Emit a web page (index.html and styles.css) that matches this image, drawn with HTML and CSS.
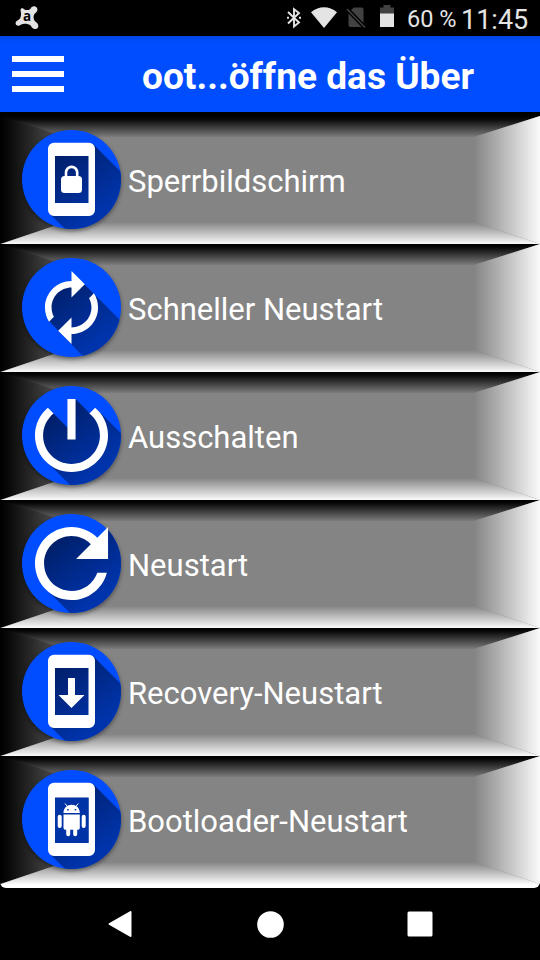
FILE: index.html
```html
<!DOCTYPE html>
<html lang="de">
<head>
<meta charset="utf-8">
<title>Reboot</title>
<link rel="stylesheet" href="styles.css">
</head>
<body>
<svg class="defs" aria-hidden="true">
  <defs>
    <linearGradient id="shade" gradientUnits="userSpaceOnUse" x1="45" y1="35" x2="96" y2="100">
      <stop offset="0" stop-color="#001c60"/><stop offset="1" stop-color="#0034ac"/>
    </linearGradient>
    <linearGradient id="leftFade"><stop offset="0" stop-color="#000"/><stop offset=".12" stop-color="#080808"/><stop offset="1" stop-color="#5a5a5a"/></linearGradient>
    <linearGradient id="rightFade"><stop offset="0" stop-color="#848484"/><stop offset="1" stop-color="#fafafa"/></linearGradient>
    <linearGradient id="topFade" x2="0" y2="1"><stop offset="0" stop-color="#000"/><stop offset=".15" stop-color="#080808"/><stop offset="1" stop-color="#7c7c7c"/></linearGradient>
    <linearGradient id="bottomFade" x2="0" y2="1"><stop offset="0" stop-color="#848484"/><stop offset="1" stop-color="#fafafa"/></linearGradient>
    <clipPath id="disc"><circle cx="71.5" cy="63.5" r="49.5"/></clipPath>
    <g id="bevel">
      <path fill="#848484" d="M0 0h540v128H0z"/>
      <path fill="url(#topFade)" d="M0 0H540L474 21H0z"/>
      <path fill="url(#leftFade)" d="M0 0L66 21V106L0 128z"/>
      <path fill="url(#rightFade)" d="M540 0V128L474 106V21z"/>
      <path fill="url(#bottomFade)" d="M1 128L66 106H474L540 128z"/>
    </g>
    <circle id="base" cx="71.5" cy="63.5" r="49.5" fill="#004dff"/>
    <g id="phone">
      <path clip-path="url(#disc)" fill="url(#shade)" d="M93 28L140 75V128H80L49 97z"/>
      <path fill="url(#shade)" d="M54 39h36v49H54z"/>
      <path fill="#fff" fill-rule="evenodd" d="M54 26.7H89A6 6 0 0 1 95 32.7V94A6 6 0 0 1 89 100H54A6 6 0 0 1 48 94V32.7A6 6 0 0 1 54 26.7zM55 40V87H88.5V40z"/>
    </g>
  </defs>
</svg>
<div class="screen">
  <div class="status">
    <svg class="avast" viewBox="0 0 26 26"><path fill="#e4e4e4" d="M6 5.500C4.800 1.500 8.500 1.500 10 3.800Q13 5 16 3C17 .5 19.500-.2 21.500.8C24.500 2.500 23.500 6 21 7.500C18.500 9.500 19 14 21 16C24.500 18 25.500 22 22.500 23.600C19.500 25 17.500 22.500 16.500 20.500C14 18.500 9 18 6.500 19.200C3.500 21.500.5 20.500.6 17.500C1 15.500 3 15 4.500 13.800C6.500 11.500 6.500 8 6 5.500z"/><text x="12.500" y="16" class="a">a</text></svg>
    <svg class="bt" viewBox="0 0 14 22"><path fill="none" stroke="#e4e4e4" stroke-width="1.900" d="M1 5L12 15.500L7 19.500V2.200L12 6L1 16.500"/><path fill="#e4e4e4" d="M0 9.800h2v2H0zM12 9.800h2v2h-2z"/></svg>
    <svg class="wifi" viewBox="0 0 26 22"><path fill="#e4e4e4" d="M0 5.300C8-1.300 18-1.300 26 5.300L13 21z"/></svg>
    <svg class="sim" viewBox="0 0 20 22"><path fill="#424242" d="M2.500 6.500L15.500 20H4.500Q2.500 20 2.500 18zM5 3L8 .5H15.500Q17.500.5 17.500 2.500V16z"/><path stroke="#424242" stroke-width="1.500" d="M1 2L19 20.500"/></svg>
    <svg class="battery" viewBox="0 0 14 22"><path fill="#424242" d="M3.500 0h7v2.500H14V9H0V2.500h3.500z"/><path fill="#e4e4e4" d="M0 8.500h14V22H0z"/></svg>
    <span class="percent">60&nbsp;%</span><span class="clock">11:45</span>
  </div>
  <header class="bar">
    <div class="menu"><i></i><i></i><i></i></div>
    <h1>oot...öffne das Über</h1>
  </header>
  <main class="list">
    <div class="row">
      <svg class="bg" viewBox="0 0 540 128"><use href="#bevel"/></svg>
      <svg class="icon" viewBox="0 0 128 128"><use href="#base" class="drop"/><use href="#phone"/><rect x="61" y="60" width="21" height="17" rx="3.500" fill="#fff"/><path fill="none" stroke="#fff" stroke-width="2.600" d="M66 61V56.500a5.600 5.600 0 0 1 11.200 0V61"/></svg>
      <span>Sperrbildschirm</span>
    </div>
    <div class="row">
      <svg class="bg" viewBox="0 0 540 128"><use href="#bevel"/></svg>
      <svg class="icon" viewBox="0 0 128 128"><use href="#base" class="drop"/><path clip-path="url(#disc)" fill="url(#shade)" d="M48.500 76L49.500 55L60 43L72 39L84.500 40.500L140 96V128H98L49 77z"/><path fill="#fff" transform="translate(71.500 63.500) scale(-3.320 3.320) translate(-12 -12)" d="M12 4V1L8 5l4 4V6c3.310 0 6 2.690 6 6 0 1.010-.25 1.970-.7 2.800l1.460 1.460C19.540 15.030 20 13.570 20 12c0-4.420-3.580-8-8-8zm0 14c-3.310 0-6-2.690-6-6 0-1.010.25-1.970.7-2.800L5.240 7.740C4.460 8.970 4 10.430 4 12c0 4.420 3.580 8 8 8v3l4-4-4-4v3z"/></svg>
      <span>Schneller Neustart</span>
    </div>
    <div class="row">
      <svg class="bg" viewBox="0 0 540 128"><use href="#bevel"/></svg>
      <svg class="icon" viewBox="0 0 128 128"><use href="#base" class="drop"/><path clip-path="url(#disc)" fill="url(#shade)" d="M39 63L42 49L52.500 40.500L68 56V27H75.600L90 41.500L95.200 35.800L140 80V128H85L45 88z"/><path fill="#fff" transform="translate(71.500 63.500) scale(4.060) translate(-12 -12)" d="M13 3h-2v10h2V3zm4.830 2.170l-1.420 1.420C17.990 7.860 19 9.810 19 12c0 3.870-3.130 7-7 7s-7-3.130-7-7c0-2.190 1.010-4.140 2.580-5.420L6.170 5.170C4.230 6.820 3 9.260 3 12c0 4.970 4.030 9 9 9s9-4.030 9-9c0-2.740-1.230-5.180-3.170-6.830z"/></svg>
      <span>Ausschalten</span>
    </div>
    <div class="row">
      <svg class="bg" viewBox="0 0 540 128"><use href="#bevel"/></svg>
      <svg class="icon" viewBox="0 0 128 128"><use href="#base" class="drop"/><path clip-path="url(#disc)" fill="url(#shade)" d="M39 63L47 41L71 31L97 39L108 28L140 60V128H85L45 88z"/><path fill="#fff" transform="translate(71.500 63.500) scale(4.570) translate(-12 -12)" d="M17.650 6.350C16.200 4.900 14.210 4 12 4c-4.420 0-7.990 3.580-7.990 8s3.570 8 7.990 8c3.730 0 6.840-2.550 7.730-6h-2.080c-.82 2.330-3.040 4-5.650 4-3.310 0-6-2.690-6-6s2.690-6 6-6c1.660 0 3.140.69 4.220 1.780L13 11h7V4l-2.350 2.350z"/></svg>
      <span>Neustart</span>
    </div>
    <div class="row">
      <svg class="bg" viewBox="0 0 540 128"><use href="#bevel"/></svg>
      <svg class="icon" viewBox="0 0 128 128"><use href="#base" class="drop"/><use href="#phone"/><path fill="#fff" d="M68 50h7v17h9.500L71.500 80L58.500 67H68z"/></svg>
      <span>Recovery-Neustart</span>
    </div>
    <div class="row">
      <svg class="bg" viewBox="0 0 540 128"><use href="#bevel"/></svg>
      <svg class="icon" viewBox="0 0 128 128"><use href="#base" class="drop"/><use href="#phone"/><path fill="#0033a6" d="M55 41.500h33.500V87H55z"/><path fill="#fff" d="M54.500 39.500h34.500v2H54.500zM63.500 57C63.500 46 79.800 46 79.800 57zM63.500 58.500h16.300V72q0 1.700-1.700 1.700H65.200q-1.700 0-1.700-1.700z"/><path stroke="#fff" stroke-width="1" d="M65 47.500l2.500 3M78.300 47.500l-2.500 3"/><path stroke="#fff" stroke-width="4" stroke-linecap="round" d="M59.700 60.700v9.300M83.700 60.700v9.300M68.200 72v6.200M75.200 72v6.200"/><path fill="#0033a6" d="M67.200 53h1.500v1.500h-1.500zM74.700 53h1.500v1.500h-1.500z"/></svg>
      <span>Bootloader-Neustart</span>
    </div>
    <div class="foot"></div>
  </main>
  <nav class="nav">
    <svg viewBox="0 0 28 28"><path fill="#fff" stroke="#fff" stroke-width="2" stroke-linejoin="round" d="M3.500 14L24.500 2V26z"/></svg>
    <svg viewBox="0 0 28 28"><circle cx="14.500" cy="14.500" r="13.300" fill="#fff"/></svg>
    <svg viewBox="0 0 28 28"><rect x="1.500" y="1.500" width="25" height="25" rx="1.500" fill="#fff"/></svg>
  </nav>
</div>
</body>
</html>
```
FILE: styles.css
```css
* { box-sizing: border-box; }
body { margin: 0; background: #000; font-family: Roboto, sans-serif; }
svg { display: block; flex: none; }
.defs { position: absolute; width: 0; height: 0; }
.screen { width: 540px; height: 960px; display: flex; flex-direction: column; overflow: hidden; background: #000; }
.status { height: 36px; display: flex; align-items: flex-start; padding-left: 15px; color: #e4e4e4; white-space: nowrap; }
.avast { width: 25px; height: 25px; margin-top: 6px; }
.a { font: bold 14px "Open Sans", sans-serif; text-anchor: middle; fill: #000; }
.bt { width: 14px; height: 22px; margin: 7px 0 0 247px; }
.wifi { width: 26px; height: 22px; margin: 7px 0 0 10px; }
.sim { width: 20px; height: 22px; margin: 7px 0 0 9px; }
.battery { width: 14px; height: 22px; margin: 5px 0 0 14px; }
.percent { width: 48px; margin: 5px 0 0 13px; font-size: 23.5px; line-height: 28px; }
.clock { margin: 3px 0 0 6px; font-size: 27px; line-height: 34px; }
.bar { height: 76px; display: flex; align-items: center; padding-left: 12px; background: linear-gradient(#0044df, #004dff 6px); }
.menu { width: 52px; display: flex; flex-direction: column; gap: 8.5px; }
.menu i { height: 6.3px; background: #fff; }
h1 { margin: 5px 0 0 78px; color: #fff; font-size: 37.1px; line-height: 44px; font-weight: 700; white-space: nowrap; }
.list { display: flex; flex-direction: column; margin-top: 4px; height: 772px; overflow: hidden; border-radius: 0 0 6px 6px; }
.row { position: relative; height: 128px; display: flex; align-items: center; color: #fff; font-size: 31px; }
.bg { position: absolute; inset: 0; width: 540px; height: 128px; }
.icon { position: relative; width: 128px; height: 128px; }
.drop { filter: drop-shadow(0 2px 2px rgba(0, 0, 0, .45)); }
.row span { position: relative; padding-top: 2px; white-space: nowrap; }
.foot { height: 4px; background: #fff; }
.nav { height: 72px; display: flex; align-items: center; gap: 122px; padding-left: 106px; }
.nav svg { width: 28px; height: 28px; }
```
